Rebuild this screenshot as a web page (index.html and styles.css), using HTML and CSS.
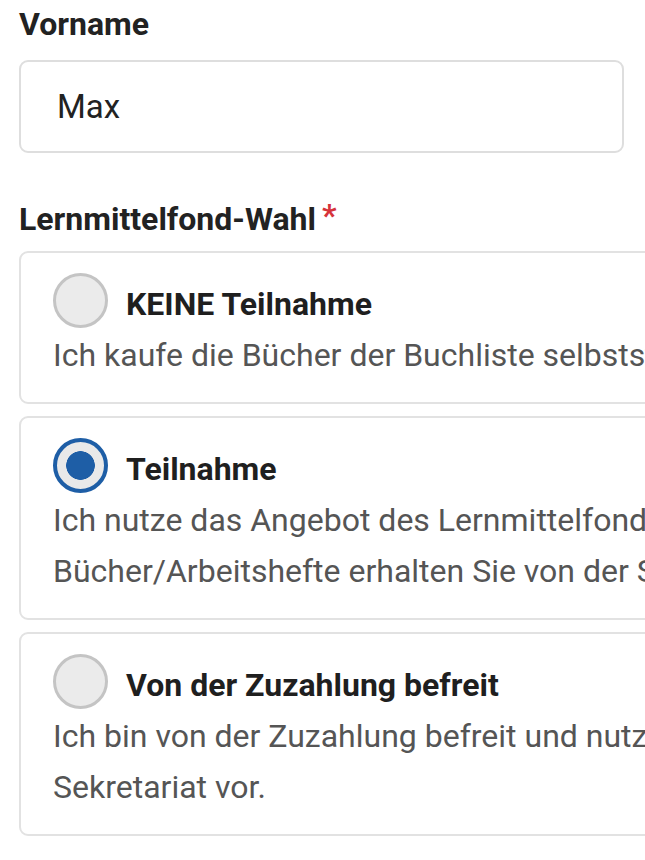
FILE: index.html
```html
<!DOCTYPE html>
<html lang="de">
<head>
<meta charset="utf-8">
<title>Lernmittelfond</title>
<link rel="stylesheet" href="styles.css">
</head>
<body>
<form class="form">
  <div class="field">
    <label class="label" for="vorname">Vorname</label>
    <input class="text-input" id="vorname" type="text" value="Max">
  </div>
  <fieldset class="group">
    <legend class="label legend">Lernmittelfond-Wahl<span class="req">*</span></legend>
    <div class="options">
      <label class="option">
        <span class="option-head">
          <input class="radio" type="radio" name="lmf" value="keine">
          <span class="option-title">KEINE Teilnahme</span>
        </span>
        <span class="option-desc">Ich kaufe die Bücher der Buchliste selbstständig im Buchhandel.</span>
      </label>
      <label class="option">
        <span class="option-head">
          <input class="radio" type="radio" name="lmf" value="teilnahme" checked>
          <span class="option-title">Teilnahme</span>
        </span>
        <span class="option-desc">Ich nutze das Angebot des Lernmittelfonds und zahle den Eigenanteil. Die<br>Bücher/Arbeitshefte erhalten Sie von der Schule.</span>
      </label>
      <label class="option">
        <span class="option-head">
          <input class="radio" type="radio" name="lmf" value="befreit">
          <span class="option-title">Von der Zuzahlung befreit</span>
        </span>
        <span class="option-desc">Ich bin von der Zuzahlung befreit und nutze den Lernmittelfond. Den Nachweis lege ich im<br>Sekretariat vor.</span>
      </label>
    </div>
  </fieldset>
</form>
</body>
</html>
```
FILE: styles.css
```css
html, body {
  margin: 0;
  padding: 0;
  background: #ffffff;
  overflow: hidden;
}

body {
  font-family: Roboto, "Noto Sans", sans-serif;
  color: #222222;
}

.form {
  padding: 4px 0 0 19px;
  width: 1400px;
}

.field {
  display: flex;
  flex-direction: column;
  gap: 16px;
}

.label {
  display: block;
  font-size: 32px;
  font-weight: 700;
  line-height: 40px;
  color: #222222;
}

.text-input {
  box-sizing: border-box;
  width: 605px;
  height: 93px;
  margin: 0;
  padding: 0 0 0 36px;
  border: 2px solid #dedede;
  border-radius: 9px;
  background: #ffffff;
  font-family: Roboto, "Noto Sans", sans-serif;
  font-size: 33px;
  color: #222222;
  outline: none;
}

.group {
  border: 0;
  margin: 42px 0 0 0;
  padding: 0;
  min-width: 0;
}

.legend {
  padding: 0;
  margin: 0 0 12px 0;
  float: left;
  width: 100%;
}

.req {
  color: #d6333a;
  margin-left: 6px;
  vertical-align: 4px;
}

.options {
  clear: both;
  display: flex;
  flex-direction: column;
  gap: 12px;
}

.option {
  display: flex;
  flex-direction: column;
  box-sizing: border-box;
  width: 1300px;
  padding: 20px 32px 21px 32px;
  border: 2px solid #e2e2e2;
  border-radius: 9px;
  background: #ffffff;
}

.option-head {
  display: flex;
  align-items: center;
  gap: 18px;
  height: 55px;
}

.radio {
  appearance: none;
  -webkit-appearance: none;
  box-sizing: border-box;
  flex: none;
  width: 55px;
  height: 55px;
  margin: 0;
  border: 3px solid #c4c4c4;
  border-radius: 50%;
  background: #ebebeb;
}

.radio:checked {
  border: 4px solid #1e5ea6;
  background: radial-gradient(circle, #1e5ea6 0 14px, #e9e9e9 14.6px);
}

.option-title {
  font-size: 32px;
  font-weight: 700;
  color: #1f1f1f;
  margin-top: 6px;
}

.option-desc {
  display: block;
  margin-top: 2px;
  font-size: 32px;
  line-height: 51px;
  color: #555555;
  white-space: nowrap;
}
```
